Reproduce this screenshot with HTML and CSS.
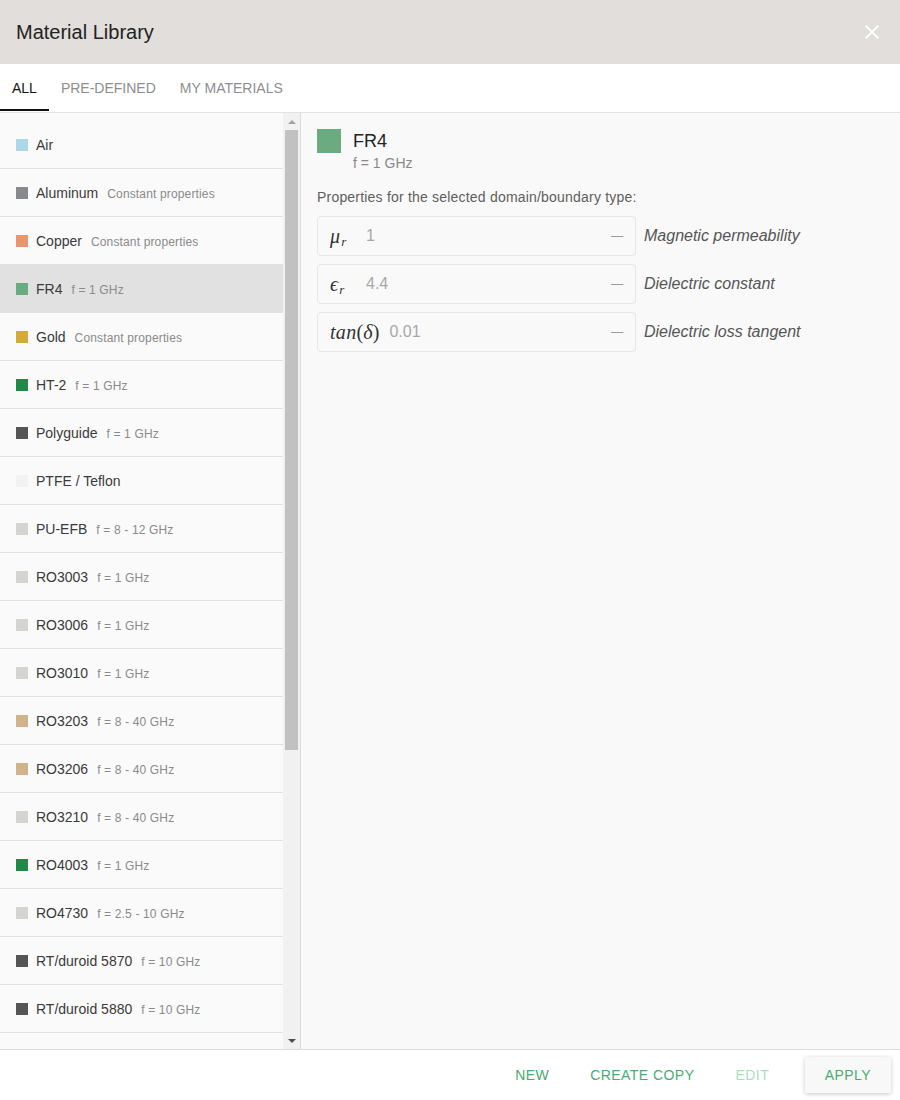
FILE: index.html
```html
<!DOCTYPE html>
<html lang="en">
<head>
<meta charset="utf-8">
<title>Material Library</title>
<link rel="stylesheet" href="styles.css">
</head>
<body>
<div class="dialog">
  <header class="dlg-header">
    <h1 class="dlg-title">Material Library</h1>
    <button class="close" aria-label="Close">
      <svg width="16" height="16" viewBox="0 0 16 16"><path d="M1.5 1.5 L14.5 14.5 M14.5 1.5 L1.5 14.5" stroke="#fff" stroke-width="2" fill="none"/></svg>
    </button>
  </header>
  <nav class="tabs">
    <span class="tab active">All</span>
    <span class="tab">Pre-defined</span>
    <span class="tab">My materials</span>
  </nav>
  <div class="body">
    <div class="list-pane">
      <ul class="mat-list">
        <li class="item"><span class="swatch" style="background:#add8e6"></span><span class="label"><span class="name">Air</span></span></li>
        <li class="item"><span class="swatch" style="background:#868a8e"></span><span class="label"><span class="name">Aluminum</span><span class="sub">Constant properties</span></span></li>
        <li class="item"><span class="swatch" style="background:#e8966b"></span><span class="label"><span class="name">Copper</span><span class="sub">Constant properties</span></span></li>
        <li class="item selected"><span class="swatch" style="background:#6aab80"></span><span class="label"><span class="name">FR4</span><span class="sub">f = 1 GHz</span></span></li>
        <li class="item"><span class="swatch" style="background:#d4ac35"></span><span class="label"><span class="name">Gold</span><span class="sub">Constant properties</span></span></li>
        <li class="item"><span class="swatch" style="background:#1e8a48"></span><span class="label"><span class="name">HT-2</span><span class="sub">f = 1 GHz</span></span></li>
        <li class="item"><span class="swatch" style="background:#555555"></span><span class="label"><span class="name">Polyguide</span><span class="sub">f = 1 GHz</span></span></li>
        <li class="item"><span class="swatch" style="background:#f2f2f2"></span><span class="label"><span class="name">PTFE / Teflon</span></span></li>
        <li class="item"><span class="swatch" style="background:#d5d5cf"></span><span class="label"><span class="name">PU-EFB</span><span class="sub">f = 8 - 12 GHz</span></span></li>
        <li class="item"><span class="swatch" style="background:#d5d5cf"></span><span class="label"><span class="name">RO3003</span><span class="sub">f = 1 GHz</span></span></li>
        <li class="item"><span class="swatch" style="background:#d5d5cf"></span><span class="label"><span class="name">RO3006</span><span class="sub">f = 1 GHz</span></span></li>
        <li class="item"><span class="swatch" style="background:#d5d5cf"></span><span class="label"><span class="name">RO3010</span><span class="sub">f = 1 GHz</span></span></li>
        <li class="item"><span class="swatch" style="background:#d2b48c"></span><span class="label"><span class="name">RO3203</span><span class="sub">f = 8 - 40 GHz</span></span></li>
        <li class="item"><span class="swatch" style="background:#d2b48c"></span><span class="label"><span class="name">RO3206</span><span class="sub">f = 8 - 40 GHz</span></span></li>
        <li class="item"><span class="swatch" style="background:#d5d5cf"></span><span class="label"><span class="name">RO3210</span><span class="sub">f = 8 - 40 GHz</span></span></li>
        <li class="item"><span class="swatch" style="background:#1e8a48"></span><span class="label"><span class="name">RO4003</span><span class="sub">f = 1 GHz</span></span></li>
        <li class="item"><span class="swatch" style="background:#d5d5cf"></span><span class="label"><span class="name">RO4730</span><span class="sub">f = 2.5 - 10 GHz</span></span></li>
        <li class="item"><span class="swatch" style="background:#555555"></span><span class="label"><span class="name">RT/duroid 5870</span><span class="sub">f = 10 GHz</span></span></li>
        <li class="item"><span class="swatch" style="background:#555555"></span><span class="label"><span class="name">RT/duroid 5880</span><span class="sub">f = 10 GHz</span></span></li>
      </ul>
      <div class="scrollbar" aria-hidden="true">
        <div class="sb-btn">
          <svg width="8" height="4" viewBox="0 0 8 4"><path d="M0 4 L4 0 L8 4Z" fill="#a3a3a3"/></svg>
        </div>
        <div class="sb-track"><div class="sb-thumb"></div></div>
        <div class="sb-btn">
          <svg width="8" height="4" viewBox="0 0 8 4"><path d="M0 0 L8 0 L4 4Z" fill="#505050"/></svg>
        </div>
      </div>
    </div>
    <section class="detail">
      <div class="detail-head">
        <span class="big-swatch"></span>
        <div class="detail-title">
          <div class="detail-name">FR4</div>
          <div class="detail-sub">f = 1 GHz</div>
        </div>
      </div>
      <p class="props-caption">Properties for the selected domain/boundary type:</p>
      <div class="prop">
        <div class="field"><span class="math"><i>μ</i><sub>r</sub></span><span class="val">1</span><span class="dash">—</span></div>
        <span class="desc">Magnetic permeability</span>
      </div>
      <div class="prop">
        <div class="field"><span class="math"><i>ϵ</i><sub>r</sub></span><span class="val">4.4</span><span class="dash">—</span></div>
        <span class="desc">Dielectric constant</span>
      </div>
      <div class="prop">
        <div class="field"><span class="math"><i>tan</i><span class="up">(</span><i>δ</i><span class="up">)</span></span><span class="val">0.01</span><span class="dash">—</span></div>
        <span class="desc">Dielectric loss tangent</span>
      </div>
    </section>
  </div>
  <footer class="actions">
    <button class="btn">New</button>
    <button class="btn">Create copy</button>
    <button class="btn disabled">Edit</button>
    <button class="btn raised">Apply</button>
  </footer>
</div>
</body>
</html>
```

FILE: styles.css
```css
html, body {
  margin: 0;
  padding: 0;
}
body {
  font-family: "Liberation Sans", Arial, sans-serif;
  color: #333;
  background: #fff;
}
.dialog {
  width: 900px;
  height: 1100px;
  display: flex;
  flex-direction: column;
  overflow: hidden;
}

/* header */
.dlg-header {
  height: 64px;
  flex: none;
  background: #e2dedb;
  display: flex;
  align-items: center;
  justify-content: space-between;
  padding: 0 20px 0 16px;
}
.dlg-title {
  margin: 0;
  font-size: 20px;
  font-weight: normal;
  color: #222;
}
.close {
  border: 0;
  background: none;
  padding: 0;
  width: 16px;
  height: 16px;
  display: flex;
  cursor: pointer;
}

/* tabs */
.tabs {
  height: 48px;
  flex: none;
  display: flex;
  border-bottom: 1px solid #e3e3e3;
  background: #fff;
}
.tab {
  position: relative;
  padding: 0 12px;
  line-height: 48px;
  font-size: 14px;
  text-transform: uppercase;
  color: #8e8e8e;
}
.tab.active {
  color: #111;
}
.tab.active::after {
  content: "";
  position: absolute;
  left: 0;
  right: 0;
  bottom: 1px;
  height: 2px;
  background: #111;
}

/* body */
.body {
  flex: 1;
  display: flex;
  min-height: 0;
}
.list-pane {
  width: 301px;
  box-sizing: border-box;
  flex: none;
  display: flex;
  border-right: 1px solid #dcdcdc;
  background: #fafafa;
}
.mat-list {
  flex: 1;
  min-width: 0;
  margin: 0;
  padding: 8px 0 0;
  list-style: none;
  overflow: hidden;
}
.scrollbar {
  width: 17px;
  flex: none;
  display: flex;
  flex-direction: column;
  background: #f1f1f1;
}
.sb-btn {
  height: 17px;
  flex: none;
  display: flex;
  align-items: center;
  justify-content: center;
}
.sb-track {
  flex: 1;
  display: flex;
  flex-direction: column;
  padding: 0 2px;
}
.sb-thumb {
  height: 620px;
  background: #c1c1c1;
}
.item {
  height: 48px;
  box-sizing: border-box;
  border-bottom: 1px solid #dfdfdf;
  display: flex;
  align-items: center;
  padding-left: 16px;
}
.item.selected {
  background: #e1e1e1;
}
.swatch {
  width: 12px;
  height: 12px;
  flex: none;
  margin-right: 8px;
}
.label {
  display: flex;
  align-items: baseline;
  white-space: nowrap;
}
.name {
  font-size: 14px;
  color: #3a3a3a;
}
.sub {
  font-size: 12px;
  letter-spacing: 0.15px;
  color: #8a8a8a;
  margin-left: 9px;
}

/* detail */
.detail {
  flex: 1;
  background: #f9f9f9;
  padding: 16px;
}
.detail-head {
  display: flex;
  align-items: flex-start;
}
.big-swatch {
  width: 24px;
  height: 24px;
  background: #6aab80;
  margin-right: 12px;
  flex: none;
}
.detail-name {
  font-size: 18px;
  line-height: 24px;
  color: #222;
}
.detail-sub {
  font-size: 14px;
  line-height: 18px;
  margin-top: 1px;
  color: #8a8a8a;
}
.props-caption {
  margin: 16px 0 10px;
  font-size: 14px;
  line-height: 18px;
  letter-spacing: 0.2px;
  color: #5e5e5e;
}
.prop {
  display: flex;
  align-items: center;
  gap: 8px;
  margin-bottom: 8px;
}
.field {
  width: 319px;
  height: 40px;
  box-sizing: border-box;
  border: 1px solid #e6e6e6;
  border-radius: 4px;
  padding: 0 12px;
  display: flex;
  align-items: center;
  background: #f9f9f9;
}
.math {
  font-family: "Liberation Serif", "DejaVu Serif", serif;
  font-size: 20px;
  color: #333;
  min-width: 26px;
  margin-right: 10px;
  white-space: nowrap;
}
.math i {
  letter-spacing: 0.3px;
}
.math sub {
  font-size: 13px;
  font-style: italic;
  vertical-align: -3px;
  line-height: 0;
  margin-left: 1px;
}
.math .up {
  font-style: normal;
}
.val {
  flex: 1;
  font-size: 16px;
  color: #a8a8a8;
}
.dash {
  font-size: 12px;
  color: #9a9a9a;
}
.desc {
  font-style: italic;
  font-size: 16px;
  color: #555;
}

/* footer */
.actions {
  height: 51px;
  flex: none;
  box-sizing: border-box;
  border-top: 1px solid #dedede;
  display: flex;
  justify-content: flex-end;
  align-items: center;
  padding-right: 9px;
  background: #fff;
}
.btn {
  font-family: "Liberation Sans", Arial, sans-serif;
  font-size: 14px;
  letter-spacing: 0.45px;
  text-transform: uppercase;
  color: #48ac71;
  background: none;
  border: 0;
  height: 36px;
  padding: 0 20.5px;
  border-radius: 2px;
  cursor: pointer;
}
.btn.disabled {
  color: #a5dfbb;
  cursor: default;
}
.btn.raised {
  margin-left: 15px;
  padding: 0 20px;
  background: #f8f8f8;
  box-shadow: 0 1px 4px rgba(0, 0, 0, 0.22);
}
```
